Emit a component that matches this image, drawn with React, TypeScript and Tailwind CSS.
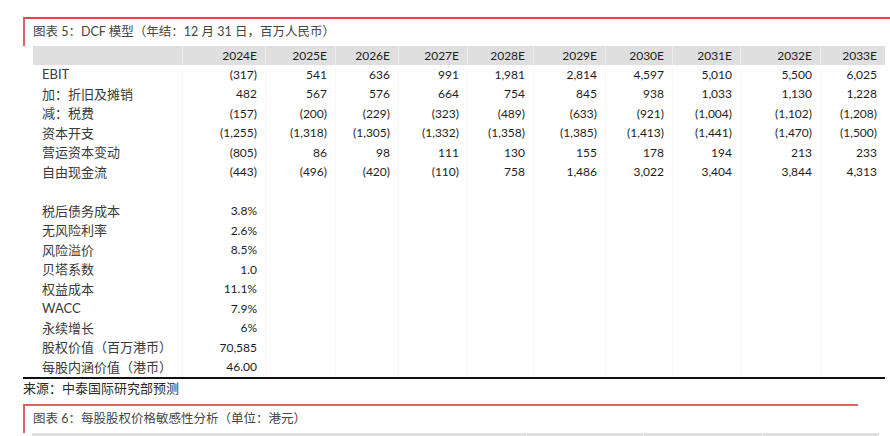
import React from 'react';

// Колонки прогноза DCF
const years = ['2024E', '2025E', '2026E', '2027E', '2028E', '2029E', '2030E', '2031E', '2032E', '2033E'];

const flowRows: { label: string; values: string[] }[] = [
  { label: 'EBIT', values: ['(317)', '541', '636', '991', '1,981', '2,814', '4,597', '5,010', '5,500', '6,025'] },
  { label: '加：折旧及摊销', values: ['482', '567', '576', '664', '754', '845', '938', '1,033', '1,130', '1,228'] },
  { label: '减：税费', values: ['(157)', '(200)', '(229)', '(323)', '(489)', '(633)', '(921)', '(1,004)', '(1,102)', '(1,208)'] },
  { label: '资本开支', values: ['(1,255)', '(1,318)', '(1,305)', '(1,332)', '(1,358)', '(1,385)', '(1,413)', '(1,441)', '(1,470)', '(1,500)'] },
  { label: '营运资本变动', values: ['(805)', '86', '98', '111', '130', '155', '178', '194', '213', '233'] },
  { label: '自由现金流', values: ['(443)', '(496)', '(420)', '(110)', '758', '1,486', '3,022', '3,404', '3,844', '4,313'] },
];

const assumptions: [string, string][] = [
  ['税后债务成本', '3.8%'],
  ['无风险利率', '2.6%'],
  ['风险溢价', '8.5%'],
  ['贝塔系数', '1.0'],
  ['权益成本', '11.1%'],
  ['WACC', '7.9%'],
  ['永续增长', '6%'],
  ['股权价值（百万港币）', '70,585'],
  ['每股内涵价值（港币）', '46.00'],
];

const grid = 'grid grid-cols-[149px_83px_70px_63px_69px_66px_72px_67px_68px_80px_65px]';
const font = { fontFamily: 'Lato, "Noto Sans CJK SC", sans-serif' };

const NumCell: React.FC<{ v?: string }> = ({ v }) => (
  <div className="h-[19.5px] flex items-center justify-end pr-[8px] text-[12px] text-[#1e1e1e] border-l border-[#f8f8f8]">{v}</div>
);

const LabelCell: React.FC<{ v: string }> = ({ v }) => (
  <div className="h-[19.5px] flex items-center pl-[9px] text-[13px] text-[#3a3a3a] whitespace-nowrap">{v}</div>
);

export default function App() {
  return (
    <div className="w-[890px] h-[436px] overflow-hidden bg-white text-[#262626]" style={font}>
      <div className="h-[17px]" />

      {/* Заголовок таблицы 5 */}
      <div className="ml-[23px] h-[29px] border-t-2 border-l-2 border-t-[#e54646] border-l-[#e06262] pl-[8px] flex items-center text-[12.5px] text-[#454545]">
        图表 5：DCF 模型（年结：12 月 31 日，百万人民币）
      </div>

      <div className="ml-[23px] w-[862px] border-b-2 border-[#111]">
        <div className="ml-[10px] w-[852px]">
          {/* Шапка */}
          <div className={`${grid} bg-[#dfdfdf] h-[19px]`}>
            <div />
            {years.map(y => (
              <div key={y} className="flex items-center justify-end pr-[8px] text-[12px] text-[#1e1e1e] border-l border-[#ececec]">{y}</div>
            ))}
          </div>

          {flowRows.map(r => (
            <div key={r.label} className={grid}>
              <LabelCell v={r.label} />
              {r.values.map((v, i) => <NumCell key={i} v={v} />)}
            </div>
          ))}

          <div className={grid}>
            <div className="h-[19.5px]" />
            {years.map(y => <NumCell key={y} />)}
          </div>

          {assumptions.map(([k, v]) => (
            <div key={k} className={grid}>
              <LabelCell v={k} />
              <NumCell v={v} />
              {years.slice(1).map(y => <NumCell key={y} />)}
            </div>
          ))}
        </div>
      </div>

      <div className="ml-[23px] h-[19px] flex items-center text-[13px] text-[#2a2a2a]">来源：中泰国际研究部预测</div>

      <div className="h-[6px]" />

      {/* Заголовок таблицы 6 */}
      <div className="ml-[23px] w-[835px] h-[29px] border-t-2 border-l-2 border-[#df6262] pl-[8px] flex items-center text-[12.5px] text-[#454545]">
        图表 6：每股股权价格敏感性分析（单位：港元）
      </div>

      <div className="ml-[32px] w-[847px] bg-[#dfdfdf] h-[19px] grid grid-cols-[494px_117px_119px_117px] text-[12px]">
        <div />
        <div className="border-l border-[#ececec] relative">
          <span className="absolute left-[47px] top-[3px] whitespace-nowrap">永续增长率</span>
        </div>
        <div className="border-l border-[#ececec]" />
        <div className="border-l border-[#ececec]" />
      </div>
    </div>
  );
}
